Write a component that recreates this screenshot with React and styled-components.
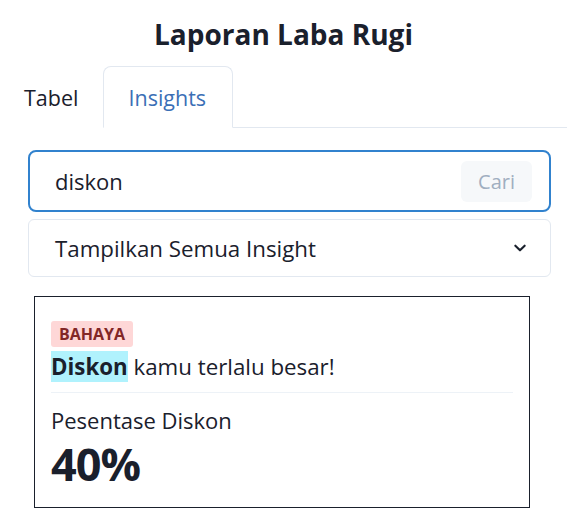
import React from "react";
import styled, {createGlobalStyle} from "styled-components";

const GlobalStyle = createGlobalStyle`
  body {
    margin: 0;
    background: #FFFFFF;
    font-family: "Open Sans", "Noto Sans", sans-serif;
    color: #1A202C;
  }
  * {
    box-sizing: border-box;
  }
`

export default function App() {
    return (
        <Page>
            <GlobalStyle/>
            <Title>Laporan Laba Rugi</Title>
            <TabList>
                <Tab>Tabel</Tab>
                <Tab active>Insights</Tab>
            </TabList>
            <Panel>
                <SearchBox>
                    <SearchInput defaultValue="diskon"/>
                    <SearchButton disabled>Cari</SearchButton>
                </SearchBox>
                <Select>
                    <span>Tampilkan Semua Insight</span>
                    <svg width="16" height="16" viewBox="0 0 24 24" fill="none">
                        <path d="M5 8.5L12 15.5L19 8.5" stroke="#1A202C" strokeWidth="3.2" strokeLinecap="round"
                              strokeLinejoin="round"/>
                    </svg>
                </Select>
                <Card>
                    <Badge>Bahaya</Badge>
                    <Message><Mark>Diskon</Mark> kamu terlalu besar!</Message>
                    <Divider/>
                    <StatLabel>Pesentase Diskon</StatLabel>
                    <StatNumber>40%</StatNumber>
                </Card>
            </Panel>
        </Page>
    );
}

const Page = styled.div`
  width: 567px;
  padding-top: 14px;
`

const Title = styled.h1`
  margin: 0;
  text-align: center;
  font-size: 28px;
  font-weight: 700;
  line-height: 40px;
  color: #1A202C;
`

const TabList = styled.div`
  display: flex;
  margin-top: 12px;
  border-bottom: 1px solid #E2E8F0;
`

const Tab = styled.button`
  height: 62px;
  margin-bottom: -1px;
  padding: ${props => props.active ? '0 26px 0 24px' : '0 24px 0 23px'};
  border: 1px solid ${props => props.active ? '#E2E8F0' : 'transparent'};
  border-bottom-color: ${props => props.active ? '#FFFFFF' : 'transparent'};
  border-radius: 8px 8px 0 0;
  background: #FFFFFF;
  font-family: inherit;
  font-size: 21.5px;
  color: ${props => props.active ? '#3B6FB6' : '#1A202C'};
`

const Panel = styled.div`
  display: flex;
  flex-direction: column;
  padding: 22px 16px 0 28px;
`

const SearchBox = styled.div`
  display: flex;
  align-items: center;
  height: 62px;
  padding: 0 17px 0 25px;
  border: 2px solid #3182CE;
  border-radius: 8px;
`

const SearchInput = styled.input`
  flex: 1;
  min-width: 0;
  border: none;
  outline: none;
  padding: 0;
  font-family: inherit;
  font-size: 22px;
  color: #1A202C;
`

const SearchButton = styled.button`
  width: 71px;
  height: 41px;
  border: none;
  border-radius: 6px;
  background: #F6F8FA;
  font-family: inherit;
  font-size: 20px;
  color: #A0AEC0;
`

const Select = styled.div`
  display: flex;
  align-items: center;
  justify-content: space-between;
  height: 58px;
  margin-top: 7px;
  padding: 0 22px 0 26px;
  border: 1px solid #E2E8F0;
  border-radius: 6px;
  font-size: 22.3px;
`

const Card = styled.div`
  display: flex;
  flex-direction: column;
  align-items: flex-start;
  width: 496px;
  margin: 19px 0 0 6px;
  padding: 24px 16px 14px;
  border: 1px solid #1A202C;
`

const Badge = styled.span`
  padding: 0 8px;
  height: 26px;
  line-height: 26px;
  border-radius: 3px;
  background: #FED7D7;
  color: #822727;
  font-size: 16px;
  font-weight: 700;
  text-transform: uppercase;
`

const Message = styled.div`
  margin-top: 4px;
  font-size: 22.3px;
  line-height: 31px;
`

const Mark = styled.mark`
  background: #B0F2FD;
  color: #1A202C;
  font-weight: 700;
`

const Divider = styled.hr`
  align-self: stretch;
  margin: 10px 0 0;
  border: none;
  border-top: 1px solid #EDF2F7;
`

const StatLabel = styled.div`
  margin-top: 12px;
  font-size: 22px;
  line-height: 30px;
`

const StatNumber = styled.div`
  font-size: 45px;
  font-weight: 700;
  letter-spacing: -1px;
  line-height: 58px;
`
